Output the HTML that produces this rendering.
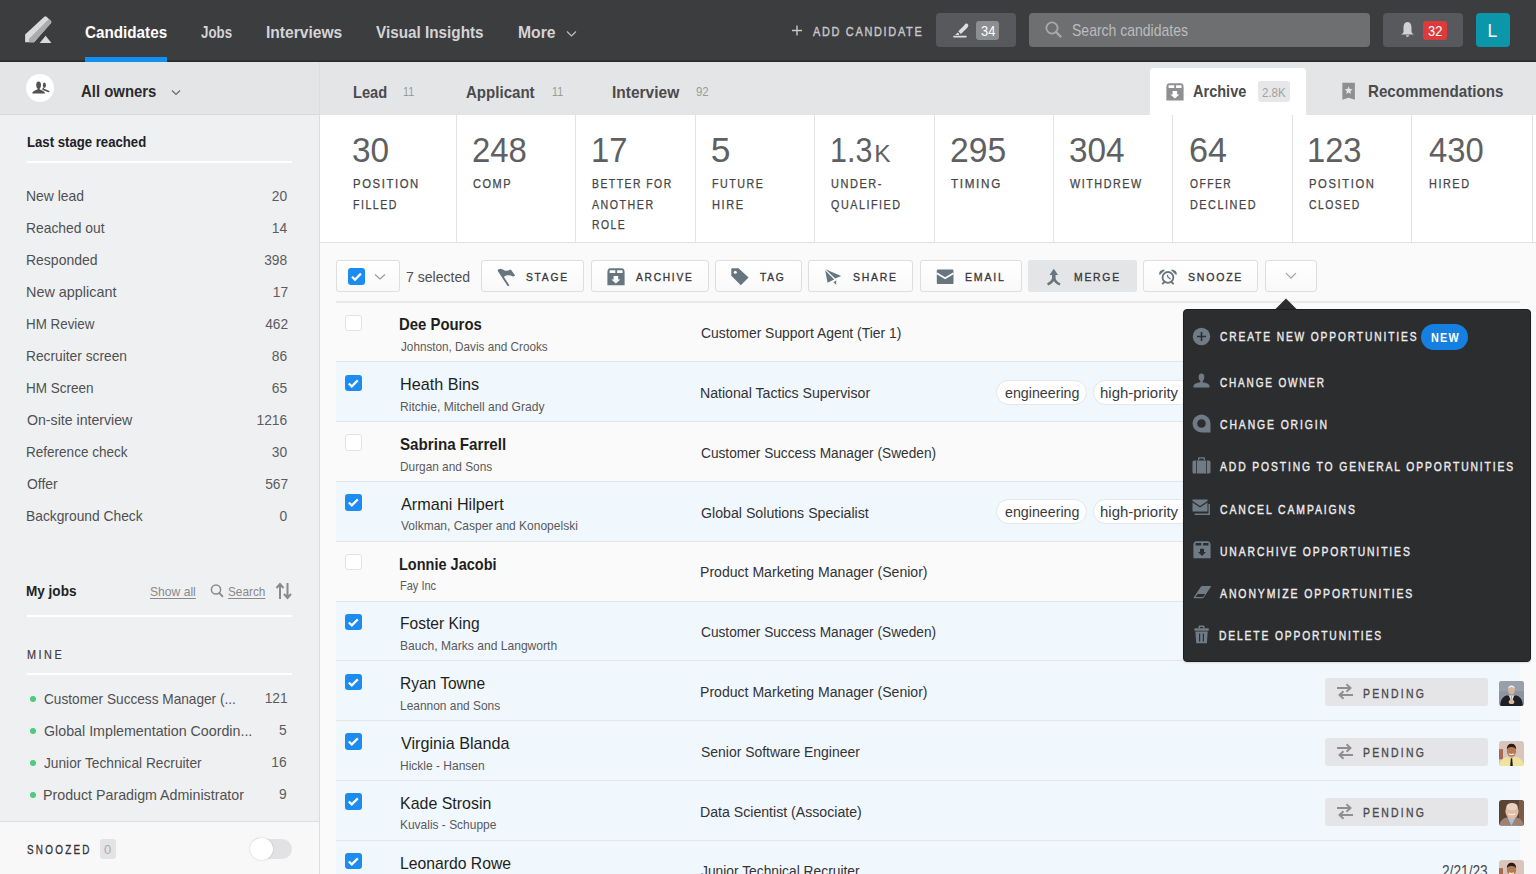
<!DOCTYPE html>
<html><head><meta charset="utf-8"><style>
html,body{margin:0;padding:0;width:1536px;height:874px;overflow:hidden;background:#fafafa;font-family:"Liberation Sans",sans-serif}
#r>div,#r>svg,#r>span{position:absolute;display:block}
#r>span{white-space:nowrap}
</style></head><body><div id="r" style="position:relative;width:1536px;height:874px;overflow:hidden">
<div style="left:0px;top:0px;width:1536px;height:62px;background:#3c3d3f"></div>
<div style="left:0px;top:60px;width:1536px;height:2px;background:linear-gradient(#333436,#262728)"></div>
<svg style="left:24px;top:16px" width="30" height="29" viewBox="0 0 30 29">
<path d="M1.1 18.5 L20.3 0.7 Q21.6 -0.2 22.8 0.9 L26.8 4.8 Q27.8 5.9 26.8 7.3 L10.1 26.3 L1.1 26.3 Z" fill="#dadada"/>
<path d="M4.9 23 L24.9 3.1 L26.8 4.8 Q27.8 5.9 26.8 7.3 L10.1 26.3 L4.9 26.3 Z" fill="#ababab"/>
<path d="M15.7 27 L21.6 19.8 L27.4 27 Z" fill="#dadada"/>
</svg>
<div style="left:85.3px;top:57px;width:81.8px;height:5px;background:#1090f2"></div>
<svg style="left:566px;top:30px" width="11" height="8" viewBox="0 0 11 8"><path d="M1 1.5 L5.5 6 L10 1.5" fill="none" stroke="#c4c4c4" stroke-width="1.1"/></svg>
<svg style="left:791px;top:25px" width="12" height="11" viewBox="0 0 12 11"><path d="M6 0.5V10.5M1 5.5H11" stroke="#c8c8c8" stroke-width="1.4"/></svg>
<div style="left:936px;top:13px;width:80px;height:34px;background:#58595c;border-radius:4px"></div>
<svg style="left:951px;top:22px" width="18" height="17" viewBox="0 0 18 17">
<path d="M8.6 10.6 L15.2 4.1" stroke="#dedede" stroke-width="3.7"/>
<path d="M13.6 2.5 Q14.8 1.3 16 1.6 Q17.1 2.2 17.2 3.2 Q17.3 4.3 16.6 5.1 L15 6.6Z" fill="#dedede"/>
<path d="M4.2 12.9 L6.9 10.5 L8.3 12.1 L7.7 12.9 Z" fill="#dedede"/>
<rect x="2.2" y="13.8" width="13.5" height="1.7" rx="0.8" fill="#dedede"/></svg>
<div style="left:976px;top:21px;width:23px;height:19px;background:#8d8e90;border-radius:3px"></div>
<div style="left:1029px;top:13px;width:341px;height:34px;background:#6e6f71;border-radius:4px"></div>
<svg style="left:1045px;top:21px" width="17" height="17" viewBox="0 0 17 17">
<circle cx="7" cy="7" r="5.6" fill="none" stroke="#a9a9ab" stroke-width="1.8"/>
<path d="M11 11 L15.5 15.5" stroke="#a9a9ab" stroke-width="2.4" stroke-linecap="round"/></svg>
<div style="left:1383px;top:13px;width:80px;height:34px;background:#58595c;border-radius:4px"></div>
<svg style="left:1400px;top:21px" width="15" height="17" viewBox="0 0 15 17">
<path d="M7.5 1 C10.5 1 11.5 4 11.5 7 L11.5 11 Q12 12.5 14 13.5 L1 13.5 Q3 12.5 3.5 11 L3.5 7 C3.5 4 4.5 1 7.5 1 Z" fill="#d2d2d4"/>
<path d="M5.8 14.3 H9.2 Q8.8 16 7.5 16 Q6.2 16 5.8 14.3Z" fill="#d2d2d4"/></svg>
<div style="left:1423px;top:20.5px;width:23.5px;height:19.5px;background:#dd3b3b;border-radius:3px"></div>
<div style="left:1476px;top:13px;width:34px;height:34px;background:#0b97a9;border-radius:4px"></div>
<div style="left:0px;top:62px;width:1536px;height:53px;background:#e4e5e7"></div>
<div style="left:0px;top:114px;width:320px;height:1px;background:#d8d9db"></div>
<div style="left:26.4px;top:74px;width:27.8px;height:28px;background:#ffffff;border-radius:50%"></div>
<svg style="left:32px;top:80px" width="18" height="16" viewBox="0 0 18 16">
<ellipse cx="6.6" cy="5.1" rx="2.4" ry="3.5" fill="#505153"/>
<rect x="5.5" y="7" width="2.2" height="3" fill="#505153"/>
<path d="M0.2 13.6 Q0.2 11.6 3 10.6 L5.3 9.6 L7.9 9.6 L10.2 10.6 Q13 11.6 13 13.6 Z" fill="#505153"/>
<ellipse cx="12.4" cy="5.3" rx="1.5" ry="2.8" fill="#505153"/>
<path d="M11.4 8.4 L11.2 9.2 L16.6 11.5" fill="none" stroke="#505153" stroke-width="1.6" stroke-linecap="round"/>
</svg>
<svg style="left:171px;top:89px" width="10" height="8" viewBox="0 0 10 8"><path d="M1 1.5 L5 5.5 L9 1.5" fill="none" stroke="#6a6a6c" stroke-width="1.2"/></svg>
<div style="left:1150px;top:68px;width:156px;height:47px;background:#ffffff;border-radius:4px 4px 0 0"></div>
<svg style="left:1165.5px;top:82.5px" width="18" height="18" viewBox="0 0 18 18">
<path d="M0.4 17.5 V4 Q0.4 1.5 2 0.6 Q2.5 0.2 3.5 0.2 H14.5 Q15.5 0.2 16 0.6 Q17.6 1.5 17.6 4 V17.5Z" fill="#8f8f91"/>
<path d="M2.6 2.2 H8.3 V4.9 H2.6Z M10.1 2.2 H15.5 V4.9 H10.1Z" fill="#ffffff"/>
<path d="M6.6 8 H11.2 V11.4 H13.4 L8.9 15.6 L4.4 11.4 H6.6Z" fill="#ffffff"/></svg>
<div style="left:1258px;top:81px;width:32px;height:21px;background:#e7e7e9;border-radius:3px"></div>
<svg style="left:1341px;top:82px" width="15" height="18" viewBox="0 0 15 18">
<path d="M1.35 0.7 H13.9 V17.7 L7.65 15.8 L1.35 17.7Z" fill="#8f8f91"/>
<path d="M7.65 4.30 L8.74 7.10 L11.74 7.27 L9.41 9.17 L10.18 12.08 L7.65 10.45 L5.12 12.08 L5.89 9.17 L3.56 7.27 L6.56 7.10Z" fill="#e4e5e7"/></svg>
<div style="left:0px;top:115px;width:319px;height:706px;background:#eff0f2"></div>
<div style="left:319px;top:62px;width:1px;height:812px;background:#dcdddf"></div>
<div style="left:27px;top:160.5px;width:265px;height:2.5px;background:#ffffff"></div>
<svg style="left:210px;top:583px" width="14" height="15" viewBox="0 0 14 15">
<circle cx="6" cy="6.5" r="4.6" fill="none" stroke="#8a8a8c" stroke-width="1.5"/>
<path d="M9.3 10 L12.5 13.3" stroke="#8a8a8c" stroke-width="1.8" stroke-linecap="round"/></svg>
<svg style="left:275px;top:582px" width="18" height="18" viewBox="0 0 18 18">
<path d="M5 17 V2.5 M1.5 6 L5 2 L8.5 6" fill="none" stroke="#8a8a8c" stroke-width="2"/>
<path d="M12.5 1 V15.5 M9 12 L12.5 16 L16 12" fill="none" stroke="#8a8a8c" stroke-width="2"/></svg>
<div style="left:27px;top:614.8px;width:265px;height:2.5px;background:#ffffff"></div>
<div style="left:27px;top:672.5px;width:265px;height:2.5px;background:#ffffff"></div>
<div style="left:30px;top:696px;width:6px;height:6px;background:#4fcb7f;border-radius:50%"></div>
<div style="left:30px;top:728px;width:6px;height:6px;background:#4fcb7f;border-radius:50%"></div>
<div style="left:30px;top:760px;width:6px;height:6px;background:#4fcb7f;border-radius:50%"></div>
<div style="left:30px;top:792px;width:6px;height:6px;background:#4fcb7f;border-radius:50%"></div>
<div style="left:0px;top:821px;width:319px;height:53px;background:#f8f8f9"></div>
<div style="left:0px;top:820.5px;width:319px;height:1px;background:#dedfe1"></div>
<div style="left:100px;top:839px;width:16px;height:20px;background:#e3e3e5;border-radius:3px"></div>
<div style="left:252px;top:839px;width:40px;height:20px;background:#e2e2e4;border-radius:10px"></div>
<div style="left:250px;top:837.5px;width:22.5px;height:22.5px;background:#ffffff;border-radius:50%;box-shadow:0 0 1.5px rgba(0,0,0,0.25)"></div>
<div style="left:320px;top:115px;width:1216px;height:127px;background:#ffffff"></div>
<div style="left:320px;top:241.5px;width:1216px;height:1px;background:#e3e3e5"></div>
<div style="left:455.58px;top:115px;width:1px;height:127px;background:#e3e3e5"></div>
<div style="left:575.06px;top:115px;width:1px;height:127px;background:#e3e3e5"></div>
<div style="left:694.54px;top:115px;width:1px;height:127px;background:#e3e3e5"></div>
<div style="left:814.02px;top:115px;width:1px;height:127px;background:#e3e3e5"></div>
<div style="left:933.5px;top:115px;width:1px;height:127px;background:#e3e3e5"></div>
<div style="left:1052.98px;top:115px;width:1px;height:127px;background:#e3e3e5"></div>
<div style="left:1172.46px;top:115px;width:1px;height:127px;background:#e3e3e5"></div>
<div style="left:1291.94px;top:115px;width:1px;height:127px;background:#e3e3e5"></div>
<div style="left:1411.42px;top:115px;width:1px;height:127px;background:#e3e3e5"></div>
<div style="left:1531.5px;top:115px;width:1px;height:127px;background:#e3e3e5"></div>
<div style="left:320px;top:242.5px;width:1216px;height:632px;background:#fafafa"></div>
<div style="left:336px;top:260.2px;width:63.5px;height:32px;background:linear-gradient(#ffffff,#f9f9fa);border:1px solid #dedee0;border-radius:3px;box-sizing:border-box"></div>
<div style="left:348px;top:268px;width:17px;height:17px;background:#1c8cf0;border-radius:3px"></div>
<svg style="left:348px;top:268px" width="17" height="17" viewBox="0 0 17 17"><path d="M4 8.7 L7 11.6 L13 5.6" fill="none" stroke="#fff" stroke-width="2.2"/></svg>
<svg style="left:374px;top:273px" width="12" height="8" viewBox="0 0 12 8"><path d="M1 1.5 L6 6 L11 1.5" fill="none" stroke="#9a9a9c" stroke-width="1.2"/></svg>
<div style="left:481.3px;top:260.2px;width:103.2px;height:32px;background:linear-gradient(#ffffff,#f9f9fa);border:1px solid #dedee0;border-radius:3px;box-sizing:border-box"></div>
<div style="left:590.8px;top:260.2px;width:118.1px;height:32px;background:linear-gradient(#ffffff,#f9f9fa);border:1px solid #dedee0;border-radius:3px;box-sizing:border-box"></div>
<div style="left:715.2px;top:260.2px;width:86.4px;height:32px;background:linear-gradient(#ffffff,#f9f9fa);border:1px solid #dedee0;border-radius:3px;box-sizing:border-box"></div>
<div style="left:807.9px;top:260.2px;width:105.4px;height:32px;background:linear-gradient(#ffffff,#f9f9fa);border:1px solid #dedee0;border-radius:3px;box-sizing:border-box"></div>
<div style="left:919.9px;top:260.2px;width:102.6px;height:32px;background:linear-gradient(#ffffff,#f9f9fa);border:1px solid #dedee0;border-radius:3px;box-sizing:border-box"></div>
<div style="left:1028.3px;top:260.2px;width:108.4px;height:32px;background:#e4e5e7;border-radius:3px"></div>
<div style="left:1142.9px;top:260.2px;width:115.6px;height:32px;background:linear-gradient(#ffffff,#f9f9fa);border:1px solid #dedee0;border-radius:3px;box-sizing:border-box"></div>
<div style="left:1265.2px;top:260.2px;width:52.3px;height:32px;background:linear-gradient(#ffffff,#f9f9fa);border:1px solid #dedee0;border-radius:3px;box-sizing:border-box"></div>
<svg style="left:1285px;top:272px" width="12" height="8" viewBox="0 0 12 8"><path d="M1 1.2 L6 6.2 L11 1.2" fill="none" stroke="#a0a0a2" stroke-width="1.1"/></svg>
<svg style="left:497px;top:268px" width="19" height="18" viewBox="0 0 19 18">
<path d="M1 2.2 Q2.5 0.6 4.1 0.9 Q6 1.3 7.6 2.4 Q10.5 3.2 13.8 1.5 L18.1 7.5 Q17.3 8.4 16 8.4 Q13 7 10.3 7.3 Q8 7.8 6.3 9.3 Z" fill="#67757f"/>
<path d="M1.6 2.6 L11.2 17.3" stroke="#67757f" stroke-width="1.9" stroke-linecap="round"/></svg>
<svg style="left:607px;top:268px" width="18" height="18" viewBox="0 0 18 18">
<path d="M0.4 17.3 V4 Q0.4 1.5 2 0.6 Q2.5 0.2 3.5 0.2 H14.5 Q15.5 0.2 16 0.6 Q17.6 1.5 17.6 4 V17.3Z" fill="#67757f"/>
<path d="M2.6 2.2 H8.3 V4.9 H2.6Z M10.1 2.2 H15.5 V4.9 H10.1Z" fill="#fcfcfc"/>
<path d="M6.6 8 H11.2 V11.4 H13.4 L8.9 15.6 L4.4 11.4 H6.6Z" fill="#ffffff"/></svg>
<svg style="left:731px;top:268px" width="19" height="18" viewBox="0 0 19 18">
<path d="M0.3 1.5 Q0.3 0.3 1.5 0.3 L7.5 0.3 L17.6 9.5 L9.8 17.3 L0.3 7.8Z" fill="#67757f"/>
<circle cx="4.3" cy="4.2" r="1.5" fill="#ffffff"/></svg>
<svg style="left:824px;top:268px" width="18" height="18" viewBox="0 0 18 18">
<path d="M1.5 1.2 L17.2 8.1 L11.2 10.5 Z" fill="#67757f"/>
<path d="M1.1 2.2 L10.2 11.4 L3.6 14.8 Z" fill="#67757f"/>
<path d="M9.4 14.3 L12.2 12.6 L12.2 16.7 Z" fill="#67757f"/></svg>
<svg style="left:936px;top:269px" width="18" height="16" viewBox="0 0 18 16">
<rect x="0.8" y="0.5" width="16.7" height="14.6" rx="1.2" fill="#67757f"/>
<path d="M0.8 4.2 L9.1 9.2 L17.5 4.2" fill="none" stroke="#fbfbfb" stroke-width="1.9"/></svg>
<svg style="left:1046px;top:268px" width="16" height="18" viewBox="0 0 16 18">
<path d="M7.8 0.8 L12.1 6.9 L9.6 6.9 L9.6 10.5 Q10.5 13.5 14.6 15.4 L13.4 17.4 Q9.8 16 7.8 13.3 Q5.8 16 2.2 17.4 L1 15.4 Q5.1 13.5 6 10.5 L6 6.9 L3.5 6.9Z" fill="#67757f"/></svg>
<svg style="left:1158px;top:268px" width="20" height="18" viewBox="0 0 20 18">
<circle cx="9.95" cy="9.4" r="5.4" fill="none" stroke="#67757f" stroke-width="1.8"/>
<path d="M9.5 7.3 L10 9.2 L12.1 10.8" fill="none" stroke="#67757f" stroke-width="1.3" stroke-linecap="round"/>
<path d="M1.2 6.6 Q0.6 2.6 5.8 1.6 Q6.6 1.8 6.8 2.3 L2 6.8 Q1.5 7 1.2 6.6Z" fill="#67757f"/>
<path d="M18.7 6.6 Q19.3 2.6 14.1 1.6 Q13.3 1.8 13.1 2.3 L17.9 6.8 Q18.4 7 18.7 6.6Z" fill="#67757f"/>
<path d="M6.3 13.8 L4.8 15.6 M13.6 13.8 L15.1 15.6" stroke="#67757f" stroke-width="1.9" stroke-linecap="round"/></svg>
<div style="left:336px;top:301.2px;width:1184px;height:1.5px;background:#e8e8ea"></div>
<div style="left:336px;top:302.5px;width:1184px;height:58.8px;background:#fafafa"></div>
<div style="left:336px;top:361.3px;width:1184px;height:1px;background:#e4e5e7"></div>
<div style="left:345px;top:314.7px;width:16.5px;height:16.5px;background:#ffffff;border:1px solid #e3e3e5;border-radius:3px;box-sizing:border-box"></div>
<div style="left:336px;top:362.3px;width:1184px;height:58.8px;background:#f0f7fd"></div>
<div style="left:336px;top:421.1px;width:1184px;height:1px;background:#e4e5e7"></div>
<div style="left:345px;top:374.5px;width:16.5px;height:16.5px;background:#1c8cf0;border-radius:3px"></div>
<svg style="left:345px;top:374.5px" width="17" height="17" viewBox="0 0 17 17"><path d="M3.8 8.5 L6.8 11.4 L12.8 5.4" fill="none" stroke="#fff" stroke-width="2.2"/></svg>
<div style="left:996px;top:379.6px;width:91px;height:25px;background:#ffffff;border:1px solid #e6e6e8;border-radius:13px;box-sizing:border-box"></div>
<div style="left:1092.7px;top:379.6px;width:100px;height:25px;background:#ffffff;border:1px solid #e6e6e8;border-radius:13px;box-sizing:border-box"></div>
<div style="left:336px;top:422.1px;width:1184px;height:58.8px;background:#fafafa"></div>
<div style="left:336px;top:480.9px;width:1184px;height:1px;background:#e4e5e7"></div>
<div style="left:345px;top:434.3px;width:16.5px;height:16.5px;background:#ffffff;border:1px solid #e3e3e5;border-radius:3px;box-sizing:border-box"></div>
<div style="left:336px;top:481.9px;width:1184px;height:58.8px;background:#f0f7fd"></div>
<div style="left:336px;top:540.7px;width:1184px;height:1px;background:#e4e5e7"></div>
<div style="left:345px;top:494.1px;width:16.5px;height:16.5px;background:#1c8cf0;border-radius:3px"></div>
<svg style="left:345px;top:494.1px" width="17" height="17" viewBox="0 0 17 17"><path d="M3.8 8.5 L6.8 11.4 L12.8 5.4" fill="none" stroke="#fff" stroke-width="2.2"/></svg>
<div style="left:996px;top:499.2px;width:91px;height:25px;background:#ffffff;border:1px solid #e6e6e8;border-radius:13px;box-sizing:border-box"></div>
<div style="left:1092.7px;top:499.2px;width:100px;height:25px;background:#ffffff;border:1px solid #e6e6e8;border-radius:13px;box-sizing:border-box"></div>
<div style="left:336px;top:541.7px;width:1184px;height:58.8px;background:#fafafa"></div>
<div style="left:336px;top:600.5px;width:1184px;height:1px;background:#e4e5e7"></div>
<div style="left:345px;top:553.9px;width:16.5px;height:16.5px;background:#ffffff;border:1px solid #e3e3e5;border-radius:3px;box-sizing:border-box"></div>
<div style="left:336px;top:601.5px;width:1184px;height:58.8px;background:#f0f7fd"></div>
<div style="left:336px;top:660.3px;width:1184px;height:1px;background:#e4e5e7"></div>
<div style="left:345px;top:613.7px;width:16.5px;height:16.5px;background:#1c8cf0;border-radius:3px"></div>
<svg style="left:345px;top:613.7px" width="17" height="17" viewBox="0 0 17 17"><path d="M3.8 8.5 L6.8 11.4 L12.8 5.4" fill="none" stroke="#fff" stroke-width="2.2"/></svg>
<div style="left:336px;top:661.3px;width:1184px;height:58.8px;background:#f0f7fd"></div>
<div style="left:336px;top:720.1px;width:1184px;height:1px;background:#e4e5e7"></div>
<div style="left:345px;top:673.5px;width:16.5px;height:16.5px;background:#1c8cf0;border-radius:3px"></div>
<svg style="left:345px;top:673.5px" width="17" height="17" viewBox="0 0 17 17"><path d="M3.8 8.5 L6.8 11.4 L12.8 5.4" fill="none" stroke="#fff" stroke-width="2.2"/></svg>
<div style="left:1325px;top:677.9px;width:163px;height:28px;background:#e5e5e7;border-radius:3px"></div>
<svg style="left:1336px;top:683.4px" width="18" height="17" viewBox="0 0 18 17">
<path d="M1 5 H14 M10.5 1.3 L14.5 5 L10.5 8.7" fill="none" stroke="#8e8e90" stroke-width="1.9"/>
<path d="M17 12 H4 M7.5 8.3 L3.5 12 L7.5 15.7" fill="none" stroke="#8e8e90" stroke-width="1.9"/></svg>
<div style="left:336px;top:721.1px;width:1184px;height:58.8px;background:#f0f7fd"></div>
<div style="left:336px;top:779.9px;width:1184px;height:1px;background:#e4e5e7"></div>
<div style="left:345px;top:733.3px;width:16.5px;height:16.5px;background:#1c8cf0;border-radius:3px"></div>
<svg style="left:345px;top:733.3px" width="17" height="17" viewBox="0 0 17 17"><path d="M3.8 8.5 L6.8 11.4 L12.8 5.4" fill="none" stroke="#fff" stroke-width="2.2"/></svg>
<div style="left:1325px;top:737.7px;width:163px;height:28px;background:#e5e5e7;border-radius:3px"></div>
<svg style="left:1336px;top:743.2px" width="18" height="17" viewBox="0 0 18 17">
<path d="M1 5 H14 M10.5 1.3 L14.5 5 L10.5 8.7" fill="none" stroke="#8e8e90" stroke-width="1.9"/>
<path d="M17 12 H4 M7.5 8.3 L3.5 12 L7.5 15.7" fill="none" stroke="#8e8e90" stroke-width="1.9"/></svg>
<div style="left:336px;top:780.9px;width:1184px;height:58.8px;background:#f0f7fd"></div>
<div style="left:336px;top:839.7px;width:1184px;height:1px;background:#e4e5e7"></div>
<div style="left:345px;top:793.1px;width:16.5px;height:16.5px;background:#1c8cf0;border-radius:3px"></div>
<svg style="left:345px;top:793.1px" width="17" height="17" viewBox="0 0 17 17"><path d="M3.8 8.5 L6.8 11.4 L12.8 5.4" fill="none" stroke="#fff" stroke-width="2.2"/></svg>
<div style="left:1325px;top:797.5px;width:163px;height:28px;background:#e5e5e7;border-radius:3px"></div>
<svg style="left:1336px;top:803.0px" width="18" height="17" viewBox="0 0 18 17">
<path d="M1 5 H14 M10.5 1.3 L14.5 5 L10.5 8.7" fill="none" stroke="#8e8e90" stroke-width="1.9"/>
<path d="M17 12 H4 M7.5 8.3 L3.5 12 L7.5 15.7" fill="none" stroke="#8e8e90" stroke-width="1.9"/></svg>
<div style="left:336px;top:840.7px;width:1184px;height:58.8px;background:#f0f7fd"></div>
<div style="left:336px;top:899.5px;width:1184px;height:1px;background:#e4e5e7"></div>
<div style="left:345px;top:852.9px;width:16.5px;height:16.5px;background:#1c8cf0;border-radius:3px"></div>
<svg style="left:345px;top:852.9px" width="17" height="17" viewBox="0 0 17 17"><path d="M3.8 8.5 L6.8 11.4 L12.8 5.4" fill="none" stroke="#fff" stroke-width="2.2"/></svg>
<div style="left:1520px;top:302px;width:16px;height:572px;background:#fafafa"></div>
<svg style="left:1499px;top:680.8px;border-radius:3px;overflow:hidden" width="25" height="25.5" viewBox="0 0 25 25" preserveAspectRatio="none"><rect width="25" height="25" fill="#8d94a0"/><rect width="25" height="10" fill="#9aa0ab"/>
<path d="M1 25 Q1.5 15.5 8 14 L12.5 16 L17 14 Q23.5 15.5 24 25Z" fill="#1f2024"/>
<path d="M10 14.3 L12.5 22 L15 14.3Z" fill="#e8e2da"/><path d="M12 15 L12.5 21 L13 15Z" fill="#b09070"/>
<ellipse cx="12.5" cy="9" rx="3.3" ry="4.2" fill="#d6b4a0"/><path d="M9.2 7.5 Q9.5 4.2 12.5 4.3 Q15.5 4.2 15.8 7.5 Q14 5.8 12.5 6 Q11 5.8 9.2 7.5Z" fill="#eeeeee"/>
<ellipse cx="12.5" cy="20.5" rx="2.8" ry="2" fill="#d8b8a0"/></svg>
<svg style="left:1499px;top:740.5px;border-radius:3px;overflow:hidden" width="25" height="25.5" viewBox="0 0 25 25" preserveAspectRatio="none"><rect width="25" height="25" fill="#d9c5bb"/><rect x="0" y="8" width="4" height="10" fill="#a86a50"/>
<path d="M0 25 Q1 17 8 15.5 L12.5 17 L17 15.5 Q24 17 25 25Z" fill="#f1e39c"/>
<path d="M11.8 17 L13.2 17 L13.8 25 L11.2 25Z" fill="#1a1a1a"/>
<ellipse cx="12.5" cy="10" rx="4.6" ry="5.6" fill="#b37a55"/>
<path d="M7.8 8 Q8 2.5 12.5 2.6 Q17 2.5 17.2 8 Q15.5 5.6 12.5 5.8 Q9.5 5.6 7.8 8Z" fill="#2a1c14"/>
<path d="M10 12.5 Q12.5 14.3 15 12.5" stroke="#f4f0ea" stroke-width="1.1" fill="none"/></svg>
<svg style="left:1499px;top:800.3px;border-radius:3px;overflow:hidden" width="25" height="25.5" viewBox="0 0 25 25" preserveAspectRatio="none"><rect width="25" height="25" fill="#5b4335"/><rect x="20" width="5" height="25" fill="#7a5a48"/>
<path d="M0 25 Q2 18 8 17 L17 17 Q23 18 25 25Z" fill="#a08272"/>
<path d="M8.5 17.5 L12.5 25 L16.5 17.5Z" fill="#a9c0d8"/>
<ellipse cx="13" cy="11" rx="6.6" ry="7.6" fill="#e2bca5"/>
<ellipse cx="13" cy="6.5" rx="5.6" ry="3.6" fill="#ecd2c2"/>
<path d="M9.5 13.5 Q12.5 15.5 16 13.5" stroke="#f6f2ee" stroke-width="1.1" fill="none"/></svg>
<svg style="left:1499px;top:860px;border-radius:3px;overflow:hidden" width="25" height="25.5" viewBox="0 0 25 25" preserveAspectRatio="none"><rect width="25" height="25" fill="#d9c5bb"/><rect x="0" y="8" width="4" height="10" fill="#a86a50"/>
<path d="M0 25 Q1 17 8 15.5 L12.5 17 L17 15.5 Q24 17 25 25Z" fill="#f1e39c"/>
<path d="M11.8 17 L13.2 17 L13.8 25 L11.2 25Z" fill="#1a1a1a"/>
<ellipse cx="12.5" cy="10" rx="4.6" ry="5.6" fill="#b37a55"/>
<path d="M7.8 8 Q8 2.5 12.5 2.6 Q17 2.5 17.2 8 Q15.5 5.6 12.5 5.8 Q9.5 5.6 7.8 8Z" fill="#2a1c14"/>
<path d="M10 12.5 Q12.5 14.3 15 12.5" stroke="#f4f0ea" stroke-width="1.1" fill="none"/></svg>
<svg style="left:1274px;top:297.5px" width="24" height="12" viewBox="0 0 24 12"><path d="M0.5 12 L12 0.5 L23.5 12Z" fill="#2c2d2f"/></svg>
<div style="left:1182.5px;top:308.5px;width:348px;height:353px;background:#2c2d2f;border:1px solid #1d1e1f;box-sizing:border-box;border-radius:4px;box-shadow:0 1px 2px rgba(0,0,0,0.12)"></div>
<div style="left:1421px;top:324.2px;width:47px;height:26.2px;background:#1580e2;border-radius:13px"></div>
<svg style="left:1192px;top:327px" width="19" height="19" viewBox="0 0 19 19"><circle cx="9.5" cy="9.5" r="8.7" fill="#6f7c86"/><path d="M9.5 5 V14 M5 9.5 H14" stroke="#2c2d2f" stroke-width="1.6"/></svg>
<svg style="left:1193px;top:373px" width="17" height="15" viewBox="0 0 17 15"><path d="M8.5 0.5 C10.6 0.5 11.3 2 11.3 4 C11.3 6 10.5 7.5 9.7 8 L9.7 9.3 C13 10 16.5 11 16.5 13 L16.5 14.5 L0.5 14.5 L0.5 13 C0.5 11 4 10 7.3 9.3 L7.3 8 C6.5 7.5 5.7 6 5.7 4 C5.7 2 6.4 0.5 8.5 0.5Z" fill="#6f7c86"/></svg>
<svg style="left:1192px;top:414px" width="19" height="19" viewBox="0 0 19 19"><path d="M9.5 0.5 A9 9 0 1 0 9.5 18.5 L18.5 18.5 L18.5 9.5 A9 9 0 0 0 9.5 0.5Z" fill="#6f7c86"/><circle cx="9.5" cy="9.5" r="4.3" fill="#2c2d2f"/></svg>
<svg style="left:1192px;top:457px" width="19" height="17" viewBox="0 0 19 17"><path d="M6 3 V1 Q6 0.3 6.8 0.3 H12.2 Q13 0.3 13 1 V3 H11.7 V1.5 H7.3 V3Z" fill="#6f7c86"/><rect x="0.5" y="3.5" width="18" height="13" rx="1.5" fill="#6f7c86"/><path d="M4.5 3.5 V16.5 M14.5 3.5 V16.5" stroke="#2c2d2f" stroke-width="0.8"/></svg>
<svg style="left:1192px;top:499px" width="19" height="17" viewBox="0 0 19 17"><path d="M0.5 0.5 H15.5 V2 L8 7 L0.5 2Z" fill="#6f7c86"/><path d="M0.5 3.5 L8 8.5 L15.5 3.5 V12.5 H0.5Z" fill="#6f7c86"/><path d="M17.2 5 V15.2 H2.5" fill="none" stroke="#6f7c86" stroke-width="1.5"/></svg>
<svg style="left:1192.5px;top:541px" width="18" height="18" viewBox="0 0 18 18"><path d="M0.4 17.3 V4 Q0.4 1.5 2 0.6 Q2.5 0.2 3.5 0.2 H14.5 Q15.5 0.2 16 0.6 Q17.6 1.5 17.6 4 V17.3Z" fill="#6f7c86"/><path d="M2.6 2 H8.3 V4.6 H2.6Z M10.1 2 H15.5 V4.6 H10.1Z" fill="#2c2d2f"/><path d="M7 7.8 H11 V11 H13 L9 15 L5 11 H7Z" fill="#2c2d2f"/></svg>
<svg style="left:1192.5px;top:585.8px" width="19" height="13" viewBox="0 0 19 13"><path d="M1 12.3 Q0.2 12.3 0.7 11.5 L7.8 0.8 Q8.3 0 9.3 0 L17.6 0 Q18.4 0 17.9 0.8 L10.8 11.5 Q10.3 12.3 9.3 12.3 Z" fill="#6f7c86"/><path d="M2.6 10.9 L4.7 7.9 L12.2 7.9 L10.1 10.9 Z" fill="#2c2d2f"/></svg>
<svg style="left:1193px;top:625px" width="17" height="19" viewBox="0 0 17 19"><path d="M5.5 3.5 V1.5 Q5.5 0.6 6.5 0.6 H10.5 Q11.5 0.6 11.5 1.5 V3.5 H10 V2 H7 V3.5Z" fill="#6f7c86"/><rect x="1.3" y="3.3" width="14.5" height="2.4" rx="0.5" fill="#6f7c86"/><path d="M2.4 6.6 H14.7 L13.9 18.3 H3.2 Z" fill="#6f7c86"/><path d="M6.6 8.6 V16.5 M10.4 8.6 V16.5" stroke="#2c2d2f" stroke-width="1.2"/></svg>
<span style="left:85.30px;top:24.30px;font-size:17px;line-height:17px;font-weight:700;color:#ffffff;letter-spacing:0.000px;transform:scaleX(0.8961);transform-origin:0 0;">Candidates</span>
<span style="left:201.30px;top:24.30px;font-size:17px;line-height:17px;font-weight:700;color:#d4d4d6;letter-spacing:0.000px;transform:scaleX(0.7827);transform-origin:0 0;">Jobs</span>
<span style="left:266.08px;top:24.30px;font-size:17px;line-height:17px;font-weight:700;color:#d4d4d6;letter-spacing:0.000px;transform:scaleX(0.9168);transform-origin:0 0;">Interviews</span>
<span style="left:376.30px;top:24.30px;font-size:17px;line-height:17px;font-weight:700;color:#d4d4d6;letter-spacing:0.000px;transform:scaleX(0.8993);transform-origin:0 0;">Visual Insights</span>
<span style="left:518.08px;top:24.30px;font-size:17px;line-height:17px;font-weight:700;color:#d4d4d6;letter-spacing:0.000px;transform:scaleX(0.9244);transform-origin:0 0;">More</span>
<span style="left:813.00px;top:25.00px;font-size:13px;line-height:13px;color:#c8c8ca;letter-spacing:2.000px;transform:scaleX(0.8414);transform-origin:0 0;-webkit-text-stroke:0.4px #c8c8ca">ADD CANDIDATE</span>
<span style="left:980.50px;top:23.80px;font-size:14px;line-height:14px;color:#ffffff;letter-spacing:0.000px;transform:scaleX(0.9185);transform-origin:0 0;">34</span>
<span style="left:1071.70px;top:21.60px;font-size:16.2px;line-height:16.2px;color:#bcbcbe;letter-spacing:0.000px;transform:scaleX(0.8650);transform-origin:0 0;">Search candidates</span>
<span style="left:1427.50px;top:23.80px;font-size:14px;line-height:14px;color:#ffffff;letter-spacing:0.000px;transform:scaleX(0.9185);transform-origin:0 0;">32</span>
<span style="left:1487.50px;top:22.75px;font-size:17.5px;line-height:17.5px;color:#ffffff;letter-spacing:0.000px;">L</span>
<span style="left:81.20px;top:83.30px;font-size:17px;line-height:17px;font-weight:700;color:#2a2b2d;letter-spacing:0.000px;transform:scaleX(0.8771);transform-origin:0 0;">All owners</span>
<span style="left:352.54px;top:83.60px;font-size:17px;line-height:17px;font-weight:700;color:#4a4b4d;letter-spacing:0.000px;transform:scaleX(0.8618);transform-origin:0 0;">Lead</span>
<span style="left:402.90px;top:86.30px;font-size:12px;line-height:12px;color:#9a9a9c;letter-spacing:0.000px;transform:scaleX(0.8918);transform-origin:0 0;">11</span>
<span style="left:466.30px;top:83.60px;font-size:17px;line-height:17px;font-weight:700;color:#4a4b4d;letter-spacing:0.000px;transform:scaleX(0.8858);transform-origin:0 0;">Applicant</span>
<span style="left:551.60px;top:86.30px;font-size:12px;line-height:12px;color:#9a9a9c;letter-spacing:0.000px;transform:scaleX(0.8918);transform-origin:0 0;">11</span>
<span style="left:612.49px;top:83.60px;font-size:17px;line-height:17px;font-weight:700;color:#4a4b4d;letter-spacing:0.000px;transform:scaleX(0.9119);transform-origin:0 0;">Interview</span>
<span style="left:696.00px;top:86.30px;font-size:12px;line-height:12px;color:#9a9a9c;letter-spacing:0.000px;transform:scaleX(0.9507);transform-origin:0 0;">92</span>
<span style="left:1193.40px;top:82.90px;font-size:17px;line-height:17px;font-weight:700;color:#4a4b4d;letter-spacing:0.000px;transform:scaleX(0.8545);transform-origin:0 0;">Archive</span>
<span style="left:1262.00px;top:85.80px;font-size:13px;line-height:13px;color:#a0a0a2;letter-spacing:0.000px;transform:scaleX(0.8865);transform-origin:0 0;">2.8K</span>
<span style="left:1367.81px;top:82.90px;font-size:17px;line-height:17px;font-weight:700;color:#4a4b4d;letter-spacing:0.000px;transform:scaleX(0.8896);transform-origin:0 0;">Recommendations</span>
<span style="left:26.90px;top:134.65px;font-size:14.5px;line-height:14.5px;font-weight:700;color:#222224;letter-spacing:0.000px;transform:scaleX(0.9072);transform-origin:0 0;">Last stage reached</span>
<span style="left:25.94px;top:189.25px;font-size:14.5px;line-height:14.5px;color:#4f5052;letter-spacing:0.000px;transform:scaleX(0.9598);transform-origin:0 0;">New lead</span>
<span style="left:271.83px;top:189.50px;font-size:13.8px;line-height:13.8px;color:#5c5c5e;letter-spacing:0.000px;">20</span>
<span style="left:25.94px;top:221.25px;font-size:14.5px;line-height:14.5px;color:#4f5052;letter-spacing:0.000px;transform:scaleX(0.9557);transform-origin:0 0;">Reached out</span>
<span style="left:271.83px;top:221.50px;font-size:13.8px;line-height:13.8px;color:#5c5c5e;letter-spacing:0.000px;">14</span>
<span style="left:25.94px;top:253.25px;font-size:14.5px;line-height:14.5px;color:#4f5052;letter-spacing:0.000px;transform:scaleX(0.9643);transform-origin:0 0;">Responded</span>
<span style="left:264.15px;top:253.50px;font-size:13.8px;line-height:13.8px;color:#5c5c5e;letter-spacing:0.000px;">398</span>
<span style="left:25.91px;top:285.25px;font-size:14.5px;line-height:14.5px;color:#4f5052;letter-spacing:0.000px;transform:scaleX(0.9928);transform-origin:0 0;">New applicant</span>
<span style="left:272.83px;top:285.50px;font-size:13.8px;line-height:13.8px;color:#5c5c5e;letter-spacing:0.000px;">17</span>
<span style="left:25.98px;top:317.25px;font-size:14.5px;line-height:14.5px;color:#4f5052;letter-spacing:0.000px;transform:scaleX(0.9233);transform-origin:0 0;">HM Review</span>
<span style="left:265.15px;top:317.50px;font-size:13.8px;line-height:13.8px;color:#5c5c5e;letter-spacing:0.000px;">462</span>
<span style="left:25.95px;top:349.25px;font-size:14.5px;line-height:14.5px;color:#4f5052;letter-spacing:0.000px;transform:scaleX(0.9496);transform-origin:0 0;">Recruiter screen</span>
<span style="left:271.83px;top:349.50px;font-size:13.8px;line-height:13.8px;color:#5c5c5e;letter-spacing:0.000px;">86</span>
<span style="left:25.97px;top:381.25px;font-size:14.5px;line-height:14.5px;color:#4f5052;letter-spacing:0.000px;transform:scaleX(0.9306);transform-origin:0 0;">HM Screen</span>
<span style="left:271.83px;top:381.50px;font-size:13.8px;line-height:13.8px;color:#5c5c5e;letter-spacing:0.000px;">65</span>
<span style="left:26.90px;top:413.25px;font-size:14.5px;line-height:14.5px;color:#4f5052;letter-spacing:0.000px;transform:scaleX(0.9751);transform-origin:0 0;">On-site interview</span>
<span style="left:256.48px;top:413.50px;font-size:13.8px;line-height:13.8px;color:#5c5c5e;letter-spacing:0.000px;">1216</span>
<span style="left:25.97px;top:445.25px;font-size:14.5px;line-height:14.5px;color:#4f5052;letter-spacing:0.000px;transform:scaleX(0.9332);transform-origin:0 0;">Reference check</span>
<span style="left:271.83px;top:445.50px;font-size:13.8px;line-height:13.8px;color:#5c5c5e;letter-spacing:0.000px;">30</span>
<span style="left:26.90px;top:477.25px;font-size:14.5px;line-height:14.5px;color:#4f5052;letter-spacing:0.000px;transform:scaleX(0.9584);transform-origin:0 0;">Offer</span>
<span style="left:265.15px;top:477.50px;font-size:13.8px;line-height:13.8px;color:#5c5c5e;letter-spacing:0.000px;">567</span>
<span style="left:25.95px;top:509.25px;font-size:14.5px;line-height:14.5px;color:#4f5052;letter-spacing:0.000px;transform:scaleX(0.9520);transform-origin:0 0;">Background Check</span>
<span style="left:279.50px;top:509.50px;font-size:13.8px;line-height:13.8px;color:#5c5c5e;letter-spacing:0.000px;">0</span>
<span style="left:26.10px;top:582.90px;font-size:15px;line-height:15px;font-weight:700;color:#222224;letter-spacing:0.000px;transform:scaleX(0.9037);transform-origin:0 0;">My jobs</span>
<span style="left:149.60px;top:584.65px;font-size:13.5px;line-height:13.5px;color:#8a8a8c;letter-spacing:0.000px;transform:scaleX(0.8975);transform-origin:0 0;text-decoration:underline;text-underline-offset:2px">Show all</span>
<span style="left:227.70px;top:584.65px;font-size:13.5px;line-height:13.5px;color:#8a8a8c;letter-spacing:0.000px;transform:scaleX(0.8730);transform-origin:0 0;text-decoration:underline;text-underline-offset:2px">Search</span>
<span style="left:27.00px;top:648.80px;font-size:12px;line-height:12px;color:#3c3c3e;letter-spacing:2.800px;transform:scaleX(0.9037);transform-origin:0 0;-webkit-text-stroke:0.2px #3c3c3e">MINE</span>
<span style="left:43.90px;top:692.25px;font-size:14.5px;line-height:14.5px;color:#4f5052;letter-spacing:0.000px;transform:scaleX(0.9411);transform-origin:0 0;">Customer Success Manager (...</span>
<span style="left:264.65px;top:692.20px;font-size:13.8px;line-height:13.8px;color:#5c5c5e;letter-spacing:0.000px;">121</span>
<span style="left:43.90px;top:724.25px;font-size:14.5px;line-height:14.5px;color:#4f5052;letter-spacing:0.000px;transform:scaleX(0.9827);transform-origin:0 0;">Global Implementation Coordin...</span>
<span style="left:279.00px;top:724.20px;font-size:13.8px;line-height:13.8px;color:#5c5c5e;letter-spacing:0.000px;">5</span>
<span style="left:43.90px;top:756.25px;font-size:14.5px;line-height:14.5px;color:#4f5052;letter-spacing:0.000px;transform:scaleX(0.9462);transform-origin:0 0;">Junior Technical Recruiter</span>
<span style="left:271.33px;top:756.20px;font-size:13.8px;line-height:13.8px;color:#5c5c5e;letter-spacing:0.000px;">16</span>
<span style="left:42.92px;top:788.25px;font-size:14.5px;line-height:14.5px;color:#4f5052;letter-spacing:0.000px;transform:scaleX(0.9816);transform-origin:0 0;">Product Paradigm Administrator</span>
<span style="left:279.00px;top:788.20px;font-size:13.8px;line-height:13.8px;color:#5c5c5e;letter-spacing:0.000px;">9</span>
<span style="left:27.30px;top:843.85px;font-size:12.3px;line-height:12.3px;color:#333335;letter-spacing:2.800px;transform:scaleX(0.8054);transform-origin:0 0;-webkit-text-stroke:0.3px #333335">SNOOZED</span>
<span style="left:104.00px;top:843.30px;font-size:13px;line-height:13px;color:#acacae;letter-spacing:0.000px;">0</span>
<span style="left:352.46px;top:133.25px;font-size:35.5px;line-height:35.5px;color:#606062;letter-spacing:0.000px;transform:scaleX(0.9406);transform-origin:0 0;">30</span>
<span style="left:353.40px;top:178.10px;font-size:12px;line-height:12px;color:#454547;letter-spacing:1.700px;transform:scaleX(0.9421);transform-origin:0 0;-webkit-text-stroke:0.25px #454547">POSITION</span>
<span style="left:353.40px;top:198.70px;font-size:12px;line-height:12px;color:#454547;letter-spacing:1.700px;transform:scaleX(0.8805);transform-origin:0 0;-webkit-text-stroke:0.25px #454547">FILLED</span>
<span style="left:471.95px;top:133.25px;font-size:35.5px;line-height:35.5px;color:#606062;letter-spacing:0.000px;transform:scaleX(0.9272);transform-origin:0 0;">248</span>
<span style="left:472.88px;top:178.10px;font-size:12px;line-height:12px;color:#454547;letter-spacing:1.700px;transform:scaleX(0.9149);transform-origin:0 0;-webkit-text-stroke:0.25px #454547">COMP</span>
<span style="left:590.51px;top:133.25px;font-size:35.5px;line-height:35.5px;color:#606062;letter-spacing:0.000px;transform:scaleX(0.9232);transform-origin:0 0;">17</span>
<span style="left:592.36px;top:178.10px;font-size:12px;line-height:12px;color:#454547;letter-spacing:1.700px;transform:scaleX(0.8676);transform-origin:0 0;-webkit-text-stroke:0.25px #454547">BETTER FOR</span>
<span style="left:592.36px;top:198.70px;font-size:12px;line-height:12px;color:#454547;letter-spacing:1.700px;transform:scaleX(0.8872);transform-origin:0 0;-webkit-text-stroke:0.25px #454547">ANOTHER</span>
<span style="left:592.36px;top:219.30px;font-size:12px;line-height:12px;color:#454547;letter-spacing:1.700px;transform:scaleX(0.8657);transform-origin:0 0;-webkit-text-stroke:0.25px #454547">ROLE</span>
<span style="left:710.84px;top:133.25px;font-size:35.5px;line-height:35.5px;color:#606062;letter-spacing:0.000px;">5</span>
<span style="left:711.84px;top:178.10px;font-size:12px;line-height:12px;color:#454547;letter-spacing:1.700px;transform:scaleX(0.8905);transform-origin:0 0;-webkit-text-stroke:0.25px #454547">FUTURE</span>
<span style="left:711.84px;top:198.70px;font-size:12px;line-height:12px;color:#454547;letter-spacing:1.700px;transform:scaleX(0.9210);transform-origin:0 0;-webkit-text-stroke:0.25px #454547">HIRE</span>
<span style="left:829.60px;top:133.25px;font-size:35.5px;line-height:35.5px;color:#606062;letter-spacing:0.000px;transform:scaleX(0.8583);transform-origin:0 0;">1.3</span>
<span style="left:874.32px;top:142.25px;font-size:24.5px;line-height:24.5px;color:#606062;letter-spacing:0.000px;">K</span>
<span style="left:831.32px;top:178.10px;font-size:12px;line-height:12px;color:#454547;letter-spacing:1.700px;transform:scaleX(0.9154);transform-origin:0 0;-webkit-text-stroke:0.25px #454547">UNDER-</span>
<span style="left:831.32px;top:198.70px;font-size:12px;line-height:12px;color:#454547;letter-spacing:1.700px;transform:scaleX(0.8980);transform-origin:0 0;-webkit-text-stroke:0.25px #454547">QUALIFIED</span>
<span style="left:949.85px;top:133.25px;font-size:35.5px;line-height:35.5px;color:#606062;letter-spacing:0.000px;transform:scaleX(0.9480);transform-origin:0 0;">295</span>
<span style="left:950.80px;top:178.10px;font-size:12px;line-height:12px;color:#454547;letter-spacing:1.700px;transform:scaleX(0.9749);transform-origin:0 0;-webkit-text-stroke:0.25px #454547">TIMING</span>
<span style="left:1069.34px;top:133.25px;font-size:35.5px;line-height:35.5px;color:#606062;letter-spacing:0.000px;transform:scaleX(0.9393);transform-origin:0 0;">304</span>
<span style="left:1070.28px;top:178.10px;font-size:12px;line-height:12px;color:#454547;letter-spacing:1.700px;transform:scaleX(0.8987);transform-origin:0 0;-webkit-text-stroke:0.25px #454547">WITHDREW</span>
<span style="left:1188.80px;top:133.25px;font-size:35.5px;line-height:35.5px;color:#606062;letter-spacing:0.000px;transform:scaleX(0.9618);transform-origin:0 0;">64</span>
<span style="left:1189.76px;top:178.10px;font-size:12px;line-height:12px;color:#454547;letter-spacing:1.700px;transform:scaleX(0.8578);transform-origin:0 0;-webkit-text-stroke:0.25px #454547">OFFER</span>
<span style="left:1189.76px;top:198.70px;font-size:12px;line-height:12px;color:#454547;letter-spacing:1.700px;transform:scaleX(0.9024);transform-origin:0 0;-webkit-text-stroke:0.25px #454547">DECLINED</span>
<span style="left:1307.40px;top:133.25px;font-size:35.5px;line-height:35.5px;color:#606062;letter-spacing:0.000px;transform:scaleX(0.9206);transform-origin:0 0;">123</span>
<span style="left:1309.24px;top:178.10px;font-size:12px;line-height:12px;color:#454547;letter-spacing:1.700px;transform:scaleX(0.9377);transform-origin:0 0;-webkit-text-stroke:0.25px #454547">POSITION</span>
<span style="left:1309.24px;top:198.70px;font-size:12px;line-height:12px;color:#454547;letter-spacing:1.700px;transform:scaleX(0.8680);transform-origin:0 0;-webkit-text-stroke:0.25px #454547">CLOSED</span>
<span style="left:1428.72px;top:133.25px;font-size:35.5px;line-height:35.5px;color:#606062;letter-spacing:0.000px;transform:scaleX(0.9233);transform-origin:0 0;">430</span>
<span style="left:1428.72px;top:178.10px;font-size:12px;line-height:12px;color:#454547;letter-spacing:1.700px;transform:scaleX(0.9062);transform-origin:0 0;-webkit-text-stroke:0.25px #454547">HIRED</span>
<span style="left:406.20px;top:268.60px;font-size:15.4px;line-height:15.4px;color:#4f4f51;letter-spacing:0.000px;transform:scaleX(0.9124);transform-origin:0 0;">7 selected</span>
<span style="left:526.30px;top:272.20px;font-size:11.8px;line-height:11.8px;color:#38383a;letter-spacing:2.000px;transform:scaleX(0.8700);transform-origin:0 0;-webkit-text-stroke:0.35px #38383a">STAGE</span>
<span style="left:636.00px;top:272.20px;font-size:11.8px;line-height:11.8px;color:#38383a;letter-spacing:2.000px;transform:scaleX(0.8657);transform-origin:0 0;-webkit-text-stroke:0.35px #38383a">ARCHIVE</span>
<span style="left:760.20px;top:272.20px;font-size:11.8px;line-height:11.8px;color:#38383a;letter-spacing:2.000px;transform:scaleX(0.8677);transform-origin:0 0;-webkit-text-stroke:0.35px #38383a">TAG</span>
<span style="left:853.10px;top:272.20px;font-size:11.8px;line-height:11.8px;color:#38383a;letter-spacing:2.000px;transform:scaleX(0.8857);transform-origin:0 0;-webkit-text-stroke:0.35px #38383a">SHARE</span>
<span style="left:965.40px;top:272.20px;font-size:11.8px;line-height:11.8px;color:#38383a;letter-spacing:2.000px;transform:scaleX(0.8964);transform-origin:0 0;-webkit-text-stroke:0.35px #38383a">EMAIL</span>
<span style="left:1073.75px;top:272.20px;font-size:11.8px;line-height:11.8px;color:#38383a;letter-spacing:2.000px;transform:scaleX(0.8795);transform-origin:0 0;-webkit-text-stroke:0.35px #38383a">MERGE</span>
<span style="left:1187.70px;top:272.20px;font-size:11.8px;line-height:11.8px;color:#38383a;letter-spacing:2.000px;transform:scaleX(0.8925);transform-origin:0 0;-webkit-text-stroke:0.35px #38383a">SNOOZE</span>
<span style="left:399.42px;top:316.40px;font-size:17px;line-height:17px;font-weight:700;color:#1f1f21;letter-spacing:0.000px;transform:scaleX(0.8762);transform-origin:0 0;">Dee Pouros</span>
<span style="left:401.00px;top:340.00px;font-size:13px;line-height:13px;color:#5a5a5c;letter-spacing:0.000px;transform:scaleX(0.9020);transform-origin:0 0;">Johnston, Davis and Crooks</span>
<span style="left:700.90px;top:325.15px;font-size:15.5px;line-height:15.5px;color:#333335;letter-spacing:0.000px;transform:scaleX(0.8969);transform-origin:0 0;">Customer Support Agent (Tier 1)</span>
<span style="left:399.95px;top:376.20px;font-size:17px;line-height:17px;color:#1f1f21;letter-spacing:0.000px;transform:scaleX(0.9515);transform-origin:0 0;">Heath Bins</span>
<span style="left:400.07px;top:399.80px;font-size:13px;line-height:13px;color:#5a5a5c;letter-spacing:0.000px;transform:scaleX(0.9300);transform-origin:0 0;">Ritchie, Mitchell and Grady</span>
<span style="left:699.99px;top:384.95px;font-size:15.5px;line-height:15.5px;color:#333335;letter-spacing:0.000px;transform:scaleX(0.9113);transform-origin:0 0;">National Tactics Supervisor</span>
<span style="left:1005.00px;top:384.50px;font-size:15.2px;line-height:15.2px;color:#3a3a3c;letter-spacing:0.000px;transform:scaleX(0.9375);transform-origin:0 0;">engineering</span>
<span style="left:1099.82px;top:384.50px;font-size:15.2px;line-height:15.2px;color:#3a3a3c;letter-spacing:0.000px;transform:scaleX(0.9842);transform-origin:0 0;">high-priority</span>
<span style="left:400.30px;top:436.00px;font-size:17px;line-height:17px;font-weight:700;color:#1f1f21;letter-spacing:0.000px;transform:scaleX(0.8916);transform-origin:0 0;">Sabrina Farrell</span>
<span style="left:400.09px;top:459.60px;font-size:13px;line-height:13px;color:#5a5a5c;letter-spacing:0.000px;transform:scaleX(0.9108);transform-origin:0 0;">Durgan and Sons</span>
<span style="left:700.90px;top:444.75px;font-size:15.5px;line-height:15.5px;color:#333335;letter-spacing:0.000px;transform:scaleX(0.8830);transform-origin:0 0;">Customer Success Manager (Sweden)</span>
<span style="left:400.90px;top:495.80px;font-size:17px;line-height:17px;color:#1f1f21;letter-spacing:0.000px;transform:scaleX(0.9540);transform-origin:0 0;">Armani Hilpert</span>
<span style="left:401.00px;top:519.40px;font-size:13px;line-height:13px;color:#5a5a5c;letter-spacing:0.000px;transform:scaleX(0.9232);transform-origin:0 0;">Volkman, Casper and Konopelski</span>
<span style="left:700.90px;top:504.55px;font-size:15.5px;line-height:15.5px;color:#333335;letter-spacing:0.000px;transform:scaleX(0.9142);transform-origin:0 0;">Global Solutions Specialist</span>
<span style="left:1005.00px;top:504.10px;font-size:15.2px;line-height:15.2px;color:#3a3a3c;letter-spacing:0.000px;transform:scaleX(0.9375);transform-origin:0 0;">engineering</span>
<span style="left:1099.82px;top:504.10px;font-size:15.2px;line-height:15.2px;color:#3a3a3c;letter-spacing:0.000px;transform:scaleX(0.9842);transform-origin:0 0;">high-priority</span>
<span style="left:399.45px;top:555.60px;font-size:17px;line-height:17px;font-weight:700;color:#1f1f21;letter-spacing:0.000px;transform:scaleX(0.8537);transform-origin:0 0;">Lonnie Jacobi</span>
<span style="left:400.15px;top:579.20px;font-size:13px;line-height:13px;color:#5a5a5c;letter-spacing:0.000px;transform:scaleX(0.8475);transform-origin:0 0;">Fay Inc</span>
<span style="left:699.99px;top:564.35px;font-size:15.5px;line-height:15.5px;color:#333335;letter-spacing:0.000px;transform:scaleX(0.9077);transform-origin:0 0;">Product Marketing Manager (Senior)</span>
<span style="left:399.98px;top:615.40px;font-size:17px;line-height:17px;color:#1f1f21;letter-spacing:0.000px;transform:scaleX(0.9161);transform-origin:0 0;">Foster King</span>
<span style="left:400.07px;top:639.00px;font-size:13px;line-height:13px;color:#5a5a5c;letter-spacing:0.000px;transform:scaleX(0.9293);transform-origin:0 0;">Bauch, Marks and Langworth</span>
<span style="left:700.90px;top:624.15px;font-size:15.5px;line-height:15.5px;color:#333335;letter-spacing:0.000px;transform:scaleX(0.8830);transform-origin:0 0;">Customer Success Manager (Sweden)</span>
<span style="left:399.99px;top:675.20px;font-size:17px;line-height:17px;color:#1f1f21;letter-spacing:0.000px;transform:scaleX(0.9121);transform-origin:0 0;">Ryan Towne</span>
<span style="left:400.08px;top:698.80px;font-size:13px;line-height:13px;color:#5a5a5c;letter-spacing:0.000px;transform:scaleX(0.9176);transform-origin:0 0;">Leannon and Sons</span>
<span style="left:699.99px;top:683.95px;font-size:15.5px;line-height:15.5px;color:#333335;letter-spacing:0.000px;transform:scaleX(0.9077);transform-origin:0 0;">Product Marketing Manager (Senior)</span>
<span style="left:1363.25px;top:687.55px;font-size:12.3px;line-height:12.3px;color:#4a4a4c;letter-spacing:2.600px;transform:scaleX(0.8493);transform-origin:0 0;-webkit-text-stroke:0.35px #4a4a4c">PENDING</span>
<span style="left:400.90px;top:735.00px;font-size:17px;line-height:17px;color:#1f1f21;letter-spacing:0.000px;transform:scaleX(0.9512);transform-origin:0 0;">Virginia Blanda</span>
<span style="left:400.08px;top:758.60px;font-size:13px;line-height:13px;color:#5a5a5c;letter-spacing:0.000px;transform:scaleX(0.9224);transform-origin:0 0;">Hickle - Hansen</span>
<span style="left:700.90px;top:743.75px;font-size:15.5px;line-height:15.5px;color:#333335;letter-spacing:0.000px;transform:scaleX(0.8993);transform-origin:0 0;">Senior Software Engineer</span>
<span style="left:1363.25px;top:747.35px;font-size:12.3px;line-height:12.3px;color:#4a4a4c;letter-spacing:2.600px;transform:scaleX(0.8493);transform-origin:0 0;-webkit-text-stroke:0.35px #4a4a4c">PENDING</span>
<span style="left:399.96px;top:794.80px;font-size:17px;line-height:17px;color:#1f1f21;letter-spacing:0.000px;transform:scaleX(0.9387);transform-origin:0 0;">Kade Strosin</span>
<span style="left:400.08px;top:818.40px;font-size:13px;line-height:13px;color:#5a5a5c;letter-spacing:0.000px;transform:scaleX(0.9194);transform-origin:0 0;">Kuvalis - Schuppe</span>
<span style="left:699.99px;top:803.55px;font-size:15.5px;line-height:15.5px;color:#333335;letter-spacing:0.000px;transform:scaleX(0.9115);transform-origin:0 0;">Data Scientist (Associate)</span>
<span style="left:1363.25px;top:807.15px;font-size:12.3px;line-height:12.3px;color:#4a4a4c;letter-spacing:2.600px;transform:scaleX(0.8493);transform-origin:0 0;-webkit-text-stroke:0.35px #4a4a4c">PENDING</span>
<span style="left:399.97px;top:854.60px;font-size:17px;line-height:17px;color:#1f1f21;letter-spacing:0.000px;transform:scaleX(0.9252);transform-origin:0 0;">Leonardo Rowe</span>
<span style="left:700.90px;top:863.35px;font-size:15.5px;line-height:15.5px;color:#333335;letter-spacing:0.000px;transform:scaleX(0.8908);transform-origin:0 0;">Junior Technical Recruiter</span>
<span style="left:1441.50px;top:864.00px;font-size:16px;line-height:16px;color:#4a4a4c;letter-spacing:0.000px;transform:scaleX(0.8563);transform-origin:0 0;">2/21/23</span>
<span style="left:1220.00px;top:331.30px;font-size:12.6px;line-height:12.6px;color:#ececee;letter-spacing:2.300px;transform:scaleX(0.8119);transform-origin:0 0;-webkit-text-stroke:0.4px #ececee">CREATE NEW OPPORTUNITIES</span>
<span style="left:1220.00px;top:377.00px;font-size:12.6px;line-height:12.6px;color:#ececee;letter-spacing:2.300px;transform:scaleX(0.7948);transform-origin:0 0;-webkit-text-stroke:0.4px #ececee">CHANGE OWNER</span>
<span style="left:1220.00px;top:419.10px;font-size:12.6px;line-height:12.6px;color:#ececee;letter-spacing:2.300px;transform:scaleX(0.8252);transform-origin:0 0;-webkit-text-stroke:0.4px #ececee">CHANGE ORIGIN</span>
<span style="left:1220.00px;top:461.30px;font-size:12.6px;line-height:12.6px;color:#ececee;letter-spacing:2.300px;transform:scaleX(0.8211);transform-origin:0 0;-webkit-text-stroke:0.4px #ececee">ADD POSTING TO GENERAL OPPORTUNITIES</span>
<span style="left:1220.00px;top:503.50px;font-size:12.6px;line-height:12.6px;color:#ececee;letter-spacing:2.300px;transform:scaleX(0.8266);transform-origin:0 0;-webkit-text-stroke:0.4px #ececee">CANCEL CAMPAIGNS</span>
<span style="left:1220.00px;top:545.70px;font-size:12.6px;line-height:12.6px;color:#ececee;letter-spacing:2.300px;transform:scaleX(0.8221);transform-origin:0 0;-webkit-text-stroke:0.4px #ececee">UNARCHIVE OPPORTUNITIES</span>
<span style="left:1220.00px;top:587.90px;font-size:12.6px;line-height:12.6px;color:#ececee;letter-spacing:2.300px;transform:scaleX(0.8305);transform-origin:0 0;-webkit-text-stroke:0.4px #ececee">ANONYMIZE OPPORTUNITIES</span>
<span style="left:1219.18px;top:630.10px;font-size:12.6px;line-height:12.6px;color:#ececee;letter-spacing:2.300px;transform:scaleX(0.8155);transform-origin:0 0;-webkit-text-stroke:0.4px #ececee">DELETE OPPORTUNITIES</span>
<span style="left:1431.00px;top:332.25px;font-size:12.5px;line-height:12.5px;font-weight:700;color:#ffffff;letter-spacing:1.500px;transform:scaleX(0.8651);transform-origin:0 0;">NEW</span>
</div></body></html>
